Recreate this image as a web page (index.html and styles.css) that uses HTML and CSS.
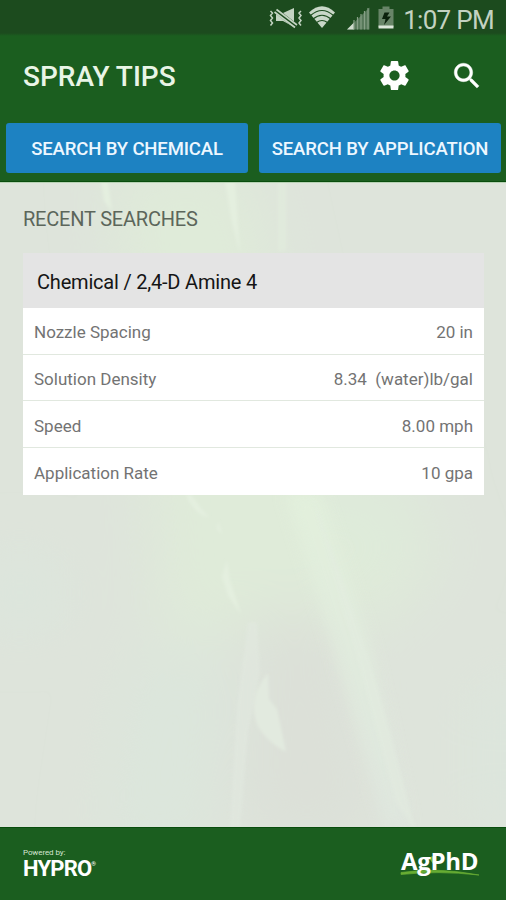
FILE: index.html
```html
<!DOCTYPE html>
<html lang="en">
<head>
<meta charset="utf-8">
<title>Spray Tips</title>
<link rel="stylesheet" href="styles.css">
</head>
<body>
<div class="app">
  <div class="status">
    <svg class="status-icons" width="130" height="36" viewBox="0 0 130 36" aria-hidden="true">
      <g fill="none" stroke="#c3d3c2" stroke-width="1.5">
        <path d="M5.500 11l2 2-2 2.500 2 2.500-2 2.500 2 2.500-2 2.500M36 11l-2 2 2 2.500-2 2.500 2 2.500-2 2.500 2 2.500"/>
      </g>
      <path d="M11 13h7l11-5v19l-11-6h-7z" fill="#c3d3c2"/>
      <path d="M10 10l22 17" stroke="#1c4b1e" stroke-width="5"/>
      <path d="M11.500 9.500l20.500 15.500M9.500 12l20.500 15.500" stroke="#c3d3c2" stroke-width="1.700"/>
      <path d="M57 28L44 12.500Q57 0 70 12.500z" fill="#c9d7c8"/>
      <path d="M45.500 15.500Q57 5.500 68.500 15.500M48 19Q57 11.500 66 19M51.500 22.500Q57 18.500 62.500 22.500" fill="none" stroke="#1c4b1e" stroke-width="1.200"/>
      <path d="M82 29.500L104.500 7.500v22z" fill="#57795a"/>
      <path d="M82 29.500l7-7v7z" fill="#cfdccd"/>
      <path d="M89 20v9.500M92.500 17v12.500M96 14v15.500M99.500 11v18.500M103 8v21.500" stroke="#86a086" stroke-width="1.200"/>
      <path d="M113.500 9h4V6.500h7V9h4v18h-15z" fill="#688568"/>
      <path d="M113.500 25.500h15v3h-15z" fill="#dde7db"/>
      <path d="M119.500 12.500h5l-2.500 4h4l-7 8.500 1.500-6h-3.500z" fill="#0b210c"/>
    </svg>
    <span class="time">1:07 PM</span>
  </div>
  <header class="toolbar">
    <h1 class="title">SPRAY TIPS</h1>
    <svg class="gear" width="35" height="35" viewBox="0 0 24 24" aria-hidden="true"><path fill="#fff" d="M19.430 12.980c.04-.32.07-.64.07-.98s-.03-.66-.07-.98l2.110-1.650c.19-.15.24-.42.12-.64l-2-3.460c-.12-.22-.39-.3-.61-.22l-2.490 1c-.52-.4-1.080-.73-1.690-.98l-.38-2.650C14.460 2.180 14.250 2 14 2h-4c-.25 0-.46.18-.49.42l-.38 2.650c-.61.25-1.170.59-1.690.98l-2.490-1c-.23-.09-.49 0-.61.22l-2 3.460c-.13.22-.07.49.12.64l2.110 1.650c-.04.32-.07.65-.07.98s.03.66.07.98l-2.110 1.650c-.19.15-.24.42-.12.64l2 3.460c.12.22.39.3.61.22l2.490-1c.52.4 1.080.73 1.690.98l.38 2.650c.03.24.24.42.49.42h4c.25 0 .46-.18.49-.42l.38-2.650c.61-.25 1.170-.59 1.690-.98l2.490 1c.23.09.49 0 .61-.22l2-3.460c.12-.22.07-.49-.12-.64l-2.110-1.650zM12 15.500c-1.930 0-3.500-1.570-3.500-3.500s1.570-3.500 3.500-3.500 3.500 1.570 3.500 3.500-1.570 3.500-3.500 3.500z"/></svg>
    <svg class="search" width="34" height="34" viewBox="0 0 24 24" aria-hidden="true"><path fill="#fff" stroke="#fff" stroke-width=".3" d="M15.500 14h-.79l-.28-.27C15.410 12.590 16 11.110 16 9.500 16 5.910 13.090 3 9.500 3S3 5.910 3 9.500 5.910 16 9.500 16c1.610 0 3.090-.59 4.230-1.570l.27.28v.79l5 4.990L20.490 19l-4.990-5zm-6 0C7.010 14 5 11.990 5 9.500S7.010 5 9.500 5 14 7.010 14 9.500 11.990 14 9.500 14z"/></svg>
  </header>
  <nav class="actions">
    <button class="btn">SEARCH BY CHEMICAL</button>
    <button class="btn btn-app">SEARCH BY APPLICATION</button>
  </nav>
  <main class="content">
    <svg class="backdrop" viewBox="0 0 506 645" preserveAspectRatio="none" aria-hidden="true">
      <defs>
        <filter id="wide" x="-50%" y="-50%" width="200%" height="200%"><feGaussianBlur stdDeviation="30"/></filter>
        <filter id="soft" x="-60%" y="-30%" width="220%" height="160%"><feGaussianBlur stdDeviation="7"/></filter>
        <filter id="fine" x="-30%" y="-30%" width="160%" height="160%"><feGaussianBlur stdDeviation="1.500"/></filter>
        <linearGradient id="leaf" x1="0" y1="0" x2="0" y2="1"><stop offset="0" stop-color="#e3f1dd"/><stop offset="1" stop-color="#dfe7df"/></linearGradient>
      </defs>
      <rect width="506" height="645" fill="#dee4db"/>
      <g filter="url(#wide)">
        <path d="M110-20h140l70 320 130 60-60 80-230 20-10-150z" fill="#dfebd9"/>
        <path d="M320 290h110l-40 90h-50z" fill="#deebda"/>
        <path d="M130 470h100l-20 200H100z" fill="#dce6dc"/>
        <path d="M-20 380h80v60h-80zM480 500h50v150h-50z" fill="#dbe6dd"/>
        <path d="M250 430h90l40 230H240z" fill="#dce0d8"/>
      </g>
      <path d="M285 310h35l50 150 40 185h-25l-55-190z" fill="url(#leaf)" opacity=".8" filter="url(#soft)"/>
      <path d="M311 310l27 75 35 105 17 60 26 100-20-30-40-150z" fill="#e3ece0" opacity=".5" filter="url(#fine)"/>
      <path d="M248 440h9l3 50-12 60-8 95h-10l7-120z" fill="#e2e9e0" opacity=".6" filter="url(#fine)"/>
      <g fill="#e4efdf" filter="url(#fine)">
        <path d="M186 312q8 20 23 23l-8-9-10-14zM218 339l4 12-5-4zM227 378l3 20 11 34-13-19-6-19z"/>
        <path d="M268 491q-22 25-10 53 8 15 28 26l-9-43-8-10z" fill="#e2eadf"/>
        <path d="M101-2h7l4 30-8-10zM225-2h10l5 72-8-30z"/>
        <path d="M278-2h8v70h-8z" opacity=".4"/>
      </g>
    </svg>
    <h2 class="section">RECENT SEARCHES</h2>
    <section class="card">
      <h3 class="card-head">Chemical / 2,4-D Amine 4</h3>
      <dl class="rows">
        <div class="row"><dt>Nozzle Spacing</dt><dd>20 in</dd></div>
        <div class="row"><dt>Solution Density</dt><dd>8.34&nbsp; (water)lb/gal</dd></div>
        <div class="row"><dt>Speed</dt><dd>8.00 mph</dd></div>
        <div class="row"><dt>Application Rate</dt><dd>10 gpa</dd></div>
      </dl>
    </section>
  </main>
  <footer class="footer">
    <div class="hypro">
      <span class="powered">Powered by:</span>
      <span class="hypro-name">HYPRO<span class="reg">®</span></span>
    </div>
    <div class="agphd">
      <svg class="swoosh" width="84" height="30" viewBox="0 0 84 30" aria-hidden="true"><path d="M1 24.500Q38 19 79 27Q38 22.500 1 26.500z" fill="#68ad33" stroke="#68ad33" stroke-width=".7"/><path d="M29 10q2-2 6-2 1 5-2 8z" fill="#78b82e"/></svg>
      <span class="agphd-name">AgPhD</span>
    </div>
  </footer>
</div>
</body>
</html>
```

FILE: styles.css
```css
* { box-sizing: border-box; }
body { margin: 0; font-family: Roboto, "Liberation Sans", sans-serif; }
h1, h2, h3, dl, dd { margin: 0; font-weight: 400; }
.app { width: 506px; height: 900px; display: flex; flex-direction: column; overflow: hidden; background: #1b5e1f; }
.status { height: 36px; flex: none; display: flex; align-items: center; justify-content: flex-end; padding-right: 12px; background: linear-gradient(#1c4b1e 33px, #1b5e1f 36px); }
.status-icons { flex: none; margin-right: 8px; }
.time { font-size: 26px; line-height: 36px; letter-spacing: -0.7px; color: #c3d2c1; padding-top: 3px; white-space: nowrap; }
.toolbar { height: 87px; flex: none; display: flex; align-items: center; padding: 0 22px 8px 23px; }
.title { flex: 1; font-size: 28px; font-weight: 500; line-height: 36px; color: #e9f5e6; padding-top: 2px; }
.gear { margin-right: 38px; }
.search { flex: none; }
.actions { height: 59px; flex: none; display: grid; grid-template-columns: 242px 242px; column-gap: 11px; padding: 0 5px 8px 6px; border-bottom: 1px solid #094d0d; }
.btn { height: 50px; padding: 2px 0 0; border: 0; border-radius: 3px; background: #1d82c2; color: #edf7ff; font: 500 18.500px/24px Roboto, sans-serif; letter-spacing: -0.12px; white-space: nowrap; }
.content { position: relative; flex: none; height: 645px; padding: 24px 22px 0 23px; border-top: 1px solid #b7d2b4; }
.backdrop { position: absolute; left: 0; top: 0; width: 100%; height: 100%; }
.section { position: relative; font-size: 20px; line-height: 24px; letter-spacing: -0.2px; color: #5c665b; }
.card { position: relative; margin-top: 22px; background: #fff; }
.card-head { height: 55px; padding: 0 14px; background: #e4e4e4; color: #151515; font-size: 20px; line-height: 58px; letter-spacing: -0.2px; }
.row { height: 46.700px; display: flex; justify-content: space-between; align-items: center; padding: 3px 11px 0; border-bottom: 1px solid #e1e8df; color: #737373; font-size: 17px; }
.row:last-child { border-bottom: 0; }
.footer { flex: 1; display: flex; justify-content: space-between; align-items: flex-start; border-top: 1px solid #094d0d; padding: 20px 24px 0 23px; color: #fff; }
.hypro { display: flex; flex-direction: column; }
.powered { font-size: 8px; line-height: 10px; letter-spacing: -0.1px; color: #d5e5d3; }
.hypro-name { display: flex; font: 700 22px/22px Roboto, sans-serif; letter-spacing: -0.8px; }
.reg { font-size: 6px; line-height: 12px; }
.agphd { position: relative; width: 82px; }
.agphd-name { position: relative; margin-left: 1px; font: 700 24px/26px "Open Sans", sans-serif; letter-spacing: -0.3px; }
.swoosh { position: absolute; left: 0; top: 0; }
```
